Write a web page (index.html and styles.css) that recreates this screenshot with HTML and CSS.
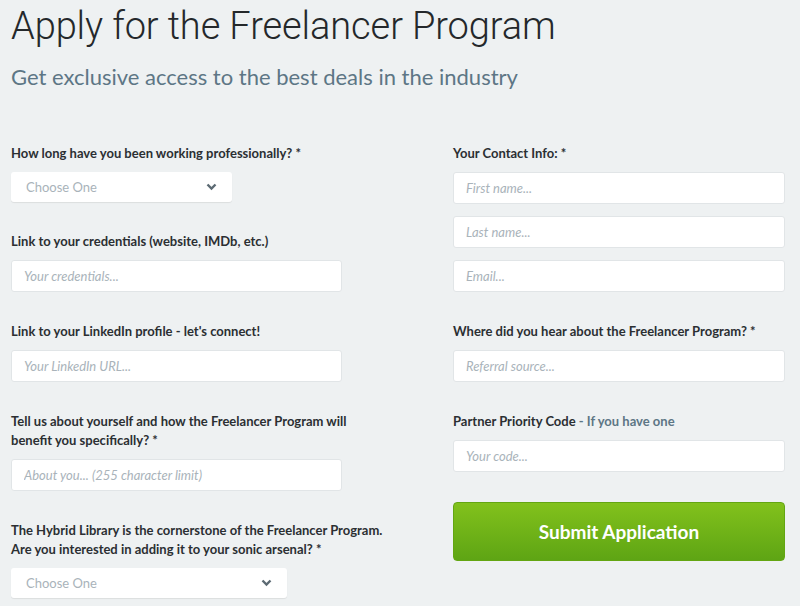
FILE: index.html
```html
<!DOCTYPE html>
<html lang="en">

<head>
    <meta charset="UTF-8">
    <title>Apply for the Freelancer Program</title>
    <link rel="stylesheet" href="styles.css">
</head>

<body>
    <div id="page">
        <h1 class="title">Apply for the Freelancer Program</h1>
        <p class="subtitle">Get exclusive access to the best deals in the industry</p>

        <form class="form">
            <div class="col col-left">
                <div class="group">
                    <label class="label">How long have you been working professionally? *</label>
                    <div class="select select-short">
                        <span>Choose One</span>
                        <svg width="11" height="8" viewBox="0 0 11 8"><path d="M1.5 1.5 L5.5 5.5 L9.5 1.5" fill="none" stroke="#5c6a73" stroke-width="2.4"/></svg>
                    </div>
                </div>
                <div class="group">
                    <label class="label">Link to your credentials (website, IMDb, etc.)</label>
                    <input class="field" type="text" placeholder="Your credentials...">
                </div>
                <div class="group">
                    <label class="label">Link to your LinkedIn profile - let's connect!</label>
                    <input class="field" type="text" placeholder="Your LinkedIn URL...">
                </div>
                <div class="group">
                    <label class="label">Tell us about yourself and how the Freelancer Program will benefit you specifically? *</label>
                    <input class="field" type="text" placeholder="About you... (255 character limit)">
                </div>
                <div class="group">
                    <label class="label">The Hybrid Library is the cornerstone of the Freelancer Program. Are you interested in adding it to your sonic arsenal? *</label>
                    <div class="select select-mid">
                        <span>Choose One</span>
                        <svg width="11" height="8" viewBox="0 0 11 8"><path d="M1.5 1.5 L5.5 5.5 L9.5 1.5" fill="none" stroke="#5c6a73" stroke-width="2.4"/></svg>
                    </div>
                </div>
            </div>

            <div class="col">
                <div class="group">
                    <label class="label">Your Contact Info: *</label>
                    <div class="stack">
                        <input class="field" type="text" placeholder="First name...">
                        <input class="field" type="text" placeholder="Last name...">
                        <input class="field" type="text" placeholder="Email...">
                    </div>
                </div>
                <div class="group">
                    <label class="label">Where did you hear about the Freelancer Program? *</label>
                    <input class="field" type="text" placeholder="Referral source...">
                </div>
                <div class="group">
                    <label class="label">Partner Priority Code <span class="hint">- If you have one</span></label>
                    <input class="field" type="text" placeholder="Your code...">
                </div>
                <button class="submit" type="button">Submit Application</button>
            </div>
        </form>
    </div>
</body>

</html>
```

FILE: styles.css
```css
body,
h1,
p {
    margin: 0;
}

body {
    background: #eef1f2;
    font-family: Lato, "Open Sans", sans-serif;
    color: #2b2f32;
    overflow: hidden;
}

#page {
    padding-left: 11px;
}

.title {
    font: 300 38px/52px Roboto, sans-serif;
    color: #24282b;
    letter-spacing: -0.1px;
}

.subtitle {
    margin-top: 11px;
    font-size: 22px;
    line-height: 28px;
    color: #5d7685;
}

.form {
    display: grid;
    grid-template-columns: 442px 332px;
    margin-top: 53px;
}

.col {
    display: flex;
    flex-direction: column;
}

.col-left .field {
    width: 331px;
}

/* long questions run past the field, but wrap before the next column */
.col-left .label {
    max-width: 372px;
}

.group {
    display: flex;
    flex-direction: column;
    align-items: flex-start;
    margin-bottom: 30px;
}

.label {
    display: block;
    font-size: 13px;
    font-weight: 700;
    line-height: 19px;
    margin-bottom: 9px;
    color: #2b2f32;
}

.hint {
    color: #5d7685;
}

.field {
    box-sizing: border-box;
    height: 32px;
    width: 100%;
    margin: 0;
    padding: 0 12px;
    border: 1px solid #e1e5e7;
    border-radius: 3px;
    background: #fff;
    font: italic 13px Lato, sans-serif;
    color: #2b2f32;
    outline: none;
}

.field::placeholder {
    color: #a9b3ba;
}

.stack {
    display: flex;
    flex-direction: column;
    gap: 12px;
    width: 100%;
}

.select {
    box-sizing: border-box;
    height: 30px;
    display: flex;
    align-items: center;
    justify-content: space-between;
    padding: 0 15px;
    background: #fff;
    border-radius: 3px;
    box-shadow: 0 1px 1px rgba(0, 0, 0, .08);
    font-size: 13px;
    color: #a9b3ba;
}

.select-short {
    width: 221px;
}

.select-mid {
    width: 276px;
}

.submit {
    height: 59px;
    width: 100%;
    border: 1px solid #63a612;
    border-radius: 4px;
    background: linear-gradient(#82c11c, #5ea514);
    color: #fff;
    font: 700 19px Lato, sans-serif;
    cursor: pointer;
}
```
